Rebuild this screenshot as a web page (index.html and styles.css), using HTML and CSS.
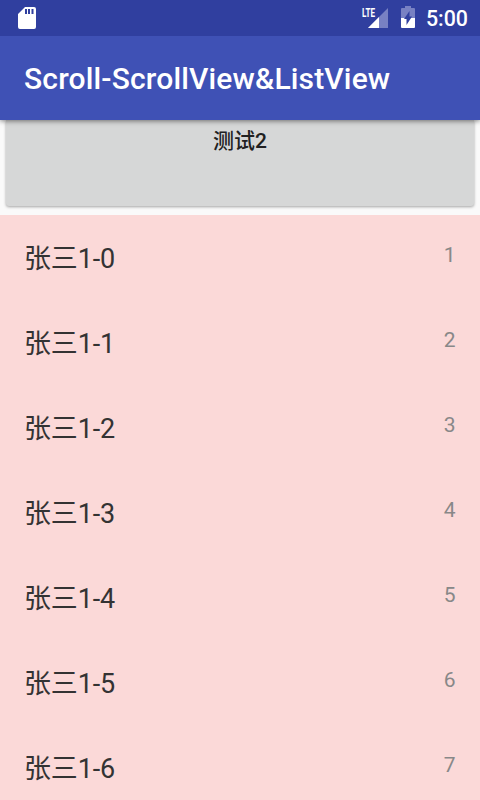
FILE: index.html
```html
<!DOCTYPE html>
<html lang="zh-CN">
<head>
<meta charset="utf-8">
<title>Scroll-ScrollView&amp;ListView</title>
<link rel="stylesheet" href="styles.css">
</head>
<body>
<header class="status">
  <svg class="sd" width="18" height="22" viewBox="0 0 18 22"><path fill="#fff" fill-rule="evenodd" d="M7 0h9a2 2 0 0 1 2 2v18a2 2 0 0 1-2 2H2a2 2 0 0 1-2-2V7zM7 2v5h2V2zM10 2v5h2V2zM13.500 2v5h2V2z"/></svg>
  <svg class="signal" width="27" height="22" viewBox="0 0 27 22"><path fill="#7881c3" d="M27 1v20H7z"/><path fill="#fff" d="M18 10v11H7z"/><text class="lte" x="1" y="10" textLength="13" lengthAdjust="spacingAndGlyphs">LTE</text></svg>
  <svg class="battery" width="14" height="22" viewBox="0 0 14 22"><path fill="#7881c3" d="M4 0h6v2h3q1 0 1 1v9H0V3q0-1 1-1h3z"/><path fill="#fff" d="M0 12h14v9q0 1-1 1H1q-1 0-1-1z"/><path fill="#303f9f" d="M8.500 5v5.500H11L5.500 19v-6H3z"/></svg>
  <time class="clock">5:00</time>
</header>
<h1 class="appbar">Scroll-ScrollView&amp;ListView</h1>
<main>
  <div class="button-area"><button class="button">测试2</button></div>
  <ul class="list">
    <li><span>张三1-0</span><small>1</small></li>
    <li><span>张三1-1</span><small>2</small></li>
    <li><span>张三1-2</span><small>3</small></li>
    <li><span>张三1-3</span><small>4</small></li>
    <li><span>张三1-4</span><small>5</small></li>
    <li><span>张三1-5</span><small>6</small></li>
    <li><span>张三1-6</span><small>7</small></li>
  </ul>
</main>
</body>
</html>
```
FILE: styles.css
```css
* { box-sizing: border-box; }
body { margin: 0; width: 480px; height: 800px; overflow: hidden; background: #fafafa; font-family: Roboto, "Noto Sans CJK SC", sans-serif; }
.status { position: relative; z-index: 2; display: flex; align-items: center; height: 36px; padding: 0 12px 0 18px; background: #303f9f; color: #fff; }
.signal { margin-left: auto; margin-right: 13px; }
.lte { fill: #fff; font: 700 12px Roboto, sans-serif; }
.battery { margin-right: 11px; position: relative; top: -1px; }
.clock { font-size: 21.400px; font-weight: 500; line-height: 36px; padding-top: 2px; }
.appbar { position: relative; z-index: 1; height: 84px; margin: 0; padding: 0 24px; background: #3f51b5; color: #fff; font-size: 30px; font-weight: 500; line-height: 85px; letter-spacing: .16px; box-shadow: 0 1px 5px rgba(0,0,0,.5); }
.button-area { height: 95px; padding: 0 6px 9px; }
.button { display: flex; align-items: flex-start; justify-content: center; width: 100%; height: 86px; padding: 6px 0 0; border: 0; border-radius: 0 0 3px 3px; background: #d6d7d7; box-shadow: 0 1px 3px rgba(0,0,0,.35); color: #212121; font: 500 21px/30px Roboto, "Noto Sans CJK SC", sans-serif; }
.list { height: 585px; margin: 0; padding: 0; list-style: none; overflow: hidden; background: #fbd9d8; }
.list li { display: flex; justify-content: space-between; height: 85px; padding: 0 24px; }
.list span { color: #333; font-size: 27px; line-height: 88px; letter-spacing: -.15px; }
.list small { color: #888; font-size: 21px; line-height: 80px; padding-right: .5px; }
```
